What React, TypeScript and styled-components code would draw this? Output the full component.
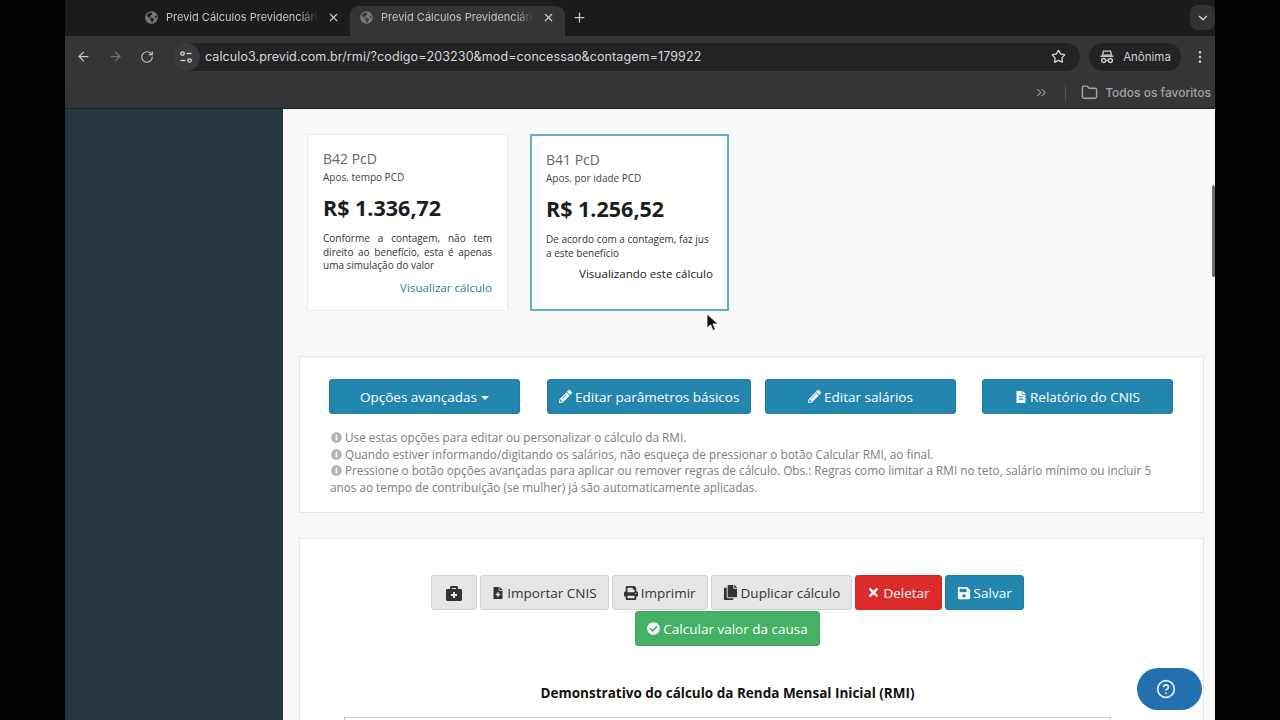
import React from 'react';
import styled, { createGlobalStyle } from 'styled-components';
import { ArrowLeft, ArrowRight, RotateCw, Star, EllipsisVertical, Folder, ChevronsRight, ChevronDown, Plus, X, CircleHelp } from 'lucide-react';
import { FaPencilAlt, FaFileAlt, FaBriefcaseMedical, FaFileMedical, FaPrint, FaCopy, FaTimes, FaSave, FaCheckCircle, FaInfoCircle, FaGlobeAmericas } from 'react-icons/fa';

const GlobalStyle = createGlobalStyle`
  html, body {
    margin: 0;
    padding: 0;
    height: 720px;
    overflow: hidden;
    background: #000;
  }
  * { box-sizing: border-box; }
`;

// --- Browser chrome ---
const Screen = styled.div`
  width: 1150px;
  height: 720px;
  margin-left: 65px;
  display: flex;
  flex-direction: column;
  overflow: hidden;
  position: relative;
  font-family: "Open Sans", "Liberation Sans", sans-serif;
`;

const TabStrip = styled.div`
  height: 36px;
  flex: none;
  background: #1b1b1d;
  display: flex;
  align-items: center;
  padding-left: 70px;
`;

const Tab = styled.div<{ $active?: boolean }>`
  width: 215px;
  height: 30px;
  margin-top: 6px;
  padding: 0 10px 8px;
  display: flex;
  align-items: center;
  gap: 8px;
  border-radius: 9px 9px 0 0;
  background: ${p => (p.$active ? '#353537' : 'transparent')};
  color: #c4c4c4;
  font-size: 11px;
  font-family: "Inter", "Liberation Sans", sans-serif;
`;

const TabTitle = styled.span`
  flex: 1;
  white-space: nowrap;
  -webkit-mask-image: linear-gradient(to right, #000 88%, transparent);
  mask-image: linear-gradient(to right, #000 88%, transparent);
`;

const NewTab = styled.div`
  color: #c8c8c8;
  display: flex;
  margin: 0 0 2px 7px;
`;

const TabMenu = styled.div`
  margin: 0 0 1px auto;
  width: 25px;
  height: 25px;
  border-radius: 8px;
  background: #333335;
  color: #ddd;
  display: flex;
  align-items: center;
  justify-content: center;
`;

const Toolbar = styled.div`
  height: 41px;
  flex: none;
  background: #353537;
  display: flex;
  align-items: center;
  padding: 0 7px 0 2px;
`;

const NavIcon = styled.div<{ $dim?: boolean }>`
  width: 32px;
  display: flex;
  justify-content: center;
  color: ${p => (p.$dim ? '#707072' : '#c6c6c6')};
`;

const AddressBar = styled.div`
  width: 908px;
  height: 28px;
  margin-left: 9px;
  border-radius: 14px;
  background: #232325;
  display: flex;
  align-items: center;
  padding: 0 14px 0 0;
  color: #d8d8d8;
  font-family: "Inter", "Liberation Sans", sans-serif;
  font-size: 12.5px;
`;

const SiteInfo = styled.div`
  width: 28px;
  height: 28px;
  margin-right: 5px;
  border-radius: 50%;
  background: #3a3a3c;
  display: flex;
  align-items: center;
  justify-content: center;
`;

const UrlText = styled.span`
  flex: 1;
  letter-spacing: 0.1px;
`;

const ProfilePill = styled.div`
  width: 92px;
  height: 28px;
  margin-left: 9px;
  border-radius: 14px;
  background: #232325;
  display: flex;
  align-items: center;
  justify-content: center;
  gap: 8px;
  color: #d0d0d0;
  font-family: "Inter", "Liberation Sans", sans-serif;
  font-size: 11.5px;
`;

const MoreButton = styled.div`
  margin-left: auto;
  display: flex;
  color: #d0d0d0;
`;

const BookmarksBar = styled.div`
  height: 32px;
  flex: none;
  background: #353537;
  border-bottom: 1px solid #1f1f21;
  display: flex;
  align-items: center;
  justify-content: flex-end;
  color: #a4a4a4;
  font-family: "Inter", "Liberation Sans", sans-serif;
  font-size: 12px;
  font-weight: 500;
  padding-right: 4px;
`;

const BookmarkDivider = styled.div`
  width: 1px;
  height: 16px;
  margin: 0 15px 0 16px;
  background: #555;
`;

const FolderLabel = styled.div`
  display: flex;
  align-items: center;
  gap: 7px;
  white-space: nowrap;
`;

// --- Page ---
const PageBody = styled.div`
  flex: 1;
  min-height: 0;
  display: flex;
  position: relative;
`;

const Sidebar = styled.div`
  width: 218px;
  flex: none;
  background: #243740;
`;

const Content = styled.div`
  flex: 1;
  background: #f9f9f9;
  padding: 25px 11px 0 16px;
  overflow: hidden;
  color: #333;
`;

const CardRow = styled.div`
  display: flex;
  gap: 22px;
  padding-left: 8px;
  margin-bottom: 45px;
`;

const Card = styled.div<{ $selected?: boolean }>`
  width: ${p => (p.$selected ? '199px' : '201px')};
  height: 177px;
  background: #fff;
  border: ${p => (p.$selected ? '2px solid #5fb3bd' : '1px solid #ececec')};
  padding: ${p => (p.$selected ? '14px 14px 0' : '14px 15px 0')};
  display: flex;
  flex-direction: column;
`;

const CardCode = styled.div`
  font-size: 14px;
  line-height: 19px;
  color: #666;
`;

const CardKind = styled.div`
  font-size: 10px;
  line-height: 14px;
  color: #444;
  margin-top: 2px;
`;

const CardValue = styled.div`
  font-size: 21.5px;
  font-weight: 700;
  line-height: 28px;
  color: #1d1d1d;
  margin-top: 10px;
`;

const CardText = styled.div<{ $justify?: boolean }>`
  font-size: 10px;
  line-height: 13.5px;
  color: #333;
  margin-top: 10px;
  text-align: ${p => (p.$justify ? 'justify' : 'left')};
`;

const CardLink = styled.div<{ $plain?: boolean }>`
  font-size: 11.6px;
  line-height: 17px;
  text-align: right;
  color: ${p => (p.$plain ? '#222' : '#2f8195')};
  margin-top: ${p => (p.$plain ? '5px' : '6px')};
`;

const Panel = styled.div`
  width: 905px;
  background: #fff;
  border: 1px solid #e8e8e8;
`;

const OptionsPanel = styled(Panel)`
  height: 157px;
  padding: 22px 30px 0 29px;
  margin-bottom: 25px;
`;

const OptionsGrid = styled.div`
  display: grid;
  grid-template-columns: 218px 218px 217px 218px;
  justify-items: start;
`;

const Button = styled.div<{ $tone?: 'blue' | 'grey' | 'red' | 'green' }>`
  height: 35px;
  padding: 0 11px;
  border-radius: 3px;
  display: inline-flex;
  align-items: center;
  justify-content: center;
  gap: 3px;
  font-size: 13.5px;
  white-space: nowrap;
  ${p => {
    switch (p.$tone) {
      case 'grey':
        return 'background:#e6e6e6;color:#333;border:1px solid #d2d2d2;';
      case 'red':
        return 'background:#dd2a2a;color:#fff;border:1px solid #d32525;';
      case 'green':
        return 'background:#45b165;color:#fff;border:1px solid #3ea95d;';
      default:
        return 'background:#2386ae;color:#fff;border:1px solid #207ea4;';
    }
  }}
`;

const OptionButton = styled(Button)`
  min-width: 191px;
`;

const Caret = styled.span`
  width: 0;
  height: 0;
  margin: 2px 0 0 1px;
  border-left: 4.5px solid transparent;
  border-right: 4.5px solid transparent;
  border-top: 4.5px solid #fff;
`;

const IconOnlyButton = styled(Button)`
  width: 46px;
`;

const Notes = styled.div`
  margin: 14px 0 0 1px;
  padding-top: 1px;
  font-size: 11.75px;
  line-height: 16.6px;
  color: #7d7d7d;
`;

const NoteIcon = styled(FaInfoCircle)`
  color: #b4b4b4;
  font-size: 11px;
  vertical-align: -1px;
  margin: 0 3px 0 1px;
`;

const CalcPanel = styled(Panel)`
  height: 260px;
  padding: 36px 92px 0 44px;
`;

const ActionRow = styled.div`
  display: flex;
  flex-wrap: wrap;
  justify-content: center;
  gap: 1px 3px;
`;

const CalcTitle = styled.div`
  margin-top: 37px;
  font-size: 13.5px;
  font-weight: 700;
  line-height: 20px;
  text-align: center;
  color: #111;
`;

const TableTop = styled.div`
  margin-top: 14px;
  height: 100px;
  border: 1px solid #c9c9c9;
`;

const HelpPill = styled.div`
  position: absolute;
  right: 13px;
  bottom: 10px;
  width: 65px;
  height: 42px;
  padding-right: 7px;
  border-radius: 21px;
  background: #2370b0;
  color: #e8f4ff;
  display: flex;
  align-items: center;
  justify-content: center;
`;

const Scrollbar = styled.div`
  position: absolute;
  right: 0;
  top: 76px;
  width: 3px;
  height: 92px;
  background: #6e6e6e;
  border-radius: 2px;
`;

const Pointer = styled.svg`
  position: absolute;
  left: 641px;
  top: 204px;
`;

const IncognitoIcon = () => (
  <svg width="16" height="14" viewBox="0 0 16 14" fill="none" stroke="#d0d0d0" strokeWidth="1.3">
    <path d="M4.5 1.2h7l1 4h-9z" />
    <path d="M1.5 6.3h13" />
    <circle cx="4.6" cy="10.5" r="2" />
    <circle cx="11.4" cy="10.5" r="2" />
    <path d="M6.6 10.3h2.8" />
  </svg>
);

const TuneIcon = () => (
  <svg width="14" height="14" viewBox="0 0 14 14" fill="none" stroke="#d4d4d4" strokeWidth="1.3">
    <circle cx="3.5" cy="3.5" r="1.7" />
    <path d="M7.5 3.5h5" />
    <circle cx="10.5" cy="10.5" r="1.7" />
    <path d="M1.5 10.5h5" />
  </svg>
);

const tabs = [false, true];

const cards = [
  {
    code: 'B42 PcD',
    kind: 'Apos. tempo PCD',
    value: 'R$ 1.336,72',
    text: 'Conforme a contagem, não tem direito ao benefício, esta é apenas uma simulação do valor',
    link: 'Visualizar cálculo',
  },
  {
    code: 'B41 PcD',
    kind: 'Apos. por idade PCD',
    value: 'R$ 1.256,52',
    text: 'De acordo com a contagem, faz jus a este benefício',
    link: 'Visualizando este cálculo',
    selected: true,
  },
];

export default function App() {
  return (
    <>
      <GlobalStyle />
      <Screen>
        <TabStrip>
          {tabs.map((active, i) => (
            <Tab key={i} $active={active}>
              <FaGlobeAmericas size={13} color="#77777a" />
              <TabTitle>Previd Cálculos Previdenciári</TabTitle>
              <X size={13} color="#d0d0d0" />
            </Tab>
          ))}
          <NewTab>
            <Plus size={15} />
          </NewTab>
          <TabMenu>
            <ChevronDown size={14} />
          </TabMenu>
        </TabStrip>

        <Toolbar>
          <NavIcon><ArrowLeft size={15} /></NavIcon>
          <NavIcon $dim><ArrowRight size={15} /></NavIcon>
          <NavIcon><RotateCw size={14} /></NavIcon>
          <AddressBar>
            <SiteInfo><TuneIcon /></SiteInfo>
            <UrlText>calculo3.previd.com.br/rmi/?codigo=203230&mod=concessao&contagem=179922</UrlText>
            <Star size={15} color="#d8d8d8" />
          </AddressBar>
          <ProfilePill>
            <IncognitoIcon />
            Anônima
          </ProfilePill>
          <MoreButton><EllipsisVertical size={16} /></MoreButton>
        </Toolbar>

        <BookmarksBar>
          <ChevronsRight size={15} color="#8e8e8e" />
          <BookmarkDivider />
          <FolderLabel>
            <Folder size={17} />
            Todos os favoritos
          </FolderLabel>
        </BookmarksBar>

        <PageBody>
          <Sidebar />
          <Content>
            <CardRow>
              {cards.map(card => (
                <Card key={card.code} $selected={card.selected}>
                  <CardCode>{card.code}</CardCode>
                  <CardKind>{card.kind}</CardKind>
                  <CardValue>{card.value}</CardValue>
                  <CardText $justify={!card.selected}>{card.text}</CardText>
                  <CardLink $plain={card.selected}>{card.link}</CardLink>
                </Card>
              ))}
            </CardRow>

            <OptionsPanel>
              <OptionsGrid>
                <OptionButton>Opções avançadas<Caret /></OptionButton>
                <OptionButton><FaPencilAlt size={13} />Editar parâmetros básicos</OptionButton>
                <OptionButton><FaPencilAlt size={13} />Editar salários</OptionButton>
                <OptionButton><FaFileAlt size={12} />Relatório do CNIS</OptionButton>
              </OptionsGrid>
              <Notes>
                <NoteIcon />Use estas opções para editar ou personalizar o cálculo da RMI.<br />
                <NoteIcon />Quando estiver informando/digitando os salários, não esqueça de pressionar o botão Calcular RMI, ao final.<br />
                <NoteIcon />Pressione o botão opções avançadas para aplicar ou remover regras de cálculo. Obs.: Regras como limitar a RMI no teto, salário mínimo ou incluir 5 anos ao tempo de contribuição (se mulher) já são automaticamente aplicadas.
              </Notes>
            </OptionsPanel>

            <CalcPanel>
              <ActionRow>
                <IconOnlyButton $tone="grey"><FaBriefcaseMedical size={16} /></IconOnlyButton>
                <Button $tone="grey"><FaFileMedical size={12} />Importar CNIS</Button>
                <Button $tone="grey"><FaPrint size={14} />Imprimir</Button>
                <Button $tone="grey"><FaCopy size={15} />Duplicar cálculo</Button>
                <Button $tone="red"><FaTimes size={13} />Deletar</Button>
                <Button><FaSave size={14} />Salvar</Button>
                <Button $tone="green"><FaCheckCircle size={13} />Calcular valor da causa</Button>
              </ActionRow>
              <CalcTitle>Demonstrativo do cálculo da Renda Mensal Inicial (RMI)</CalcTitle>
              <TableTop />
            </CalcPanel>
          </Content>
          <Scrollbar />
          <Pointer width="14" height="20" viewBox="0 0 14 20">
            <path d="M1 1v14l3.6-3.2 2.4 5.6 2.4-1-2.4-5.5H12z" fill="#111" stroke="#fff" strokeWidth="0.8" />
          </Pointer>
          <HelpPill><CircleHelp size={20} /></HelpPill>
        </PageBody>
      </Screen>
    </>
  );
}
